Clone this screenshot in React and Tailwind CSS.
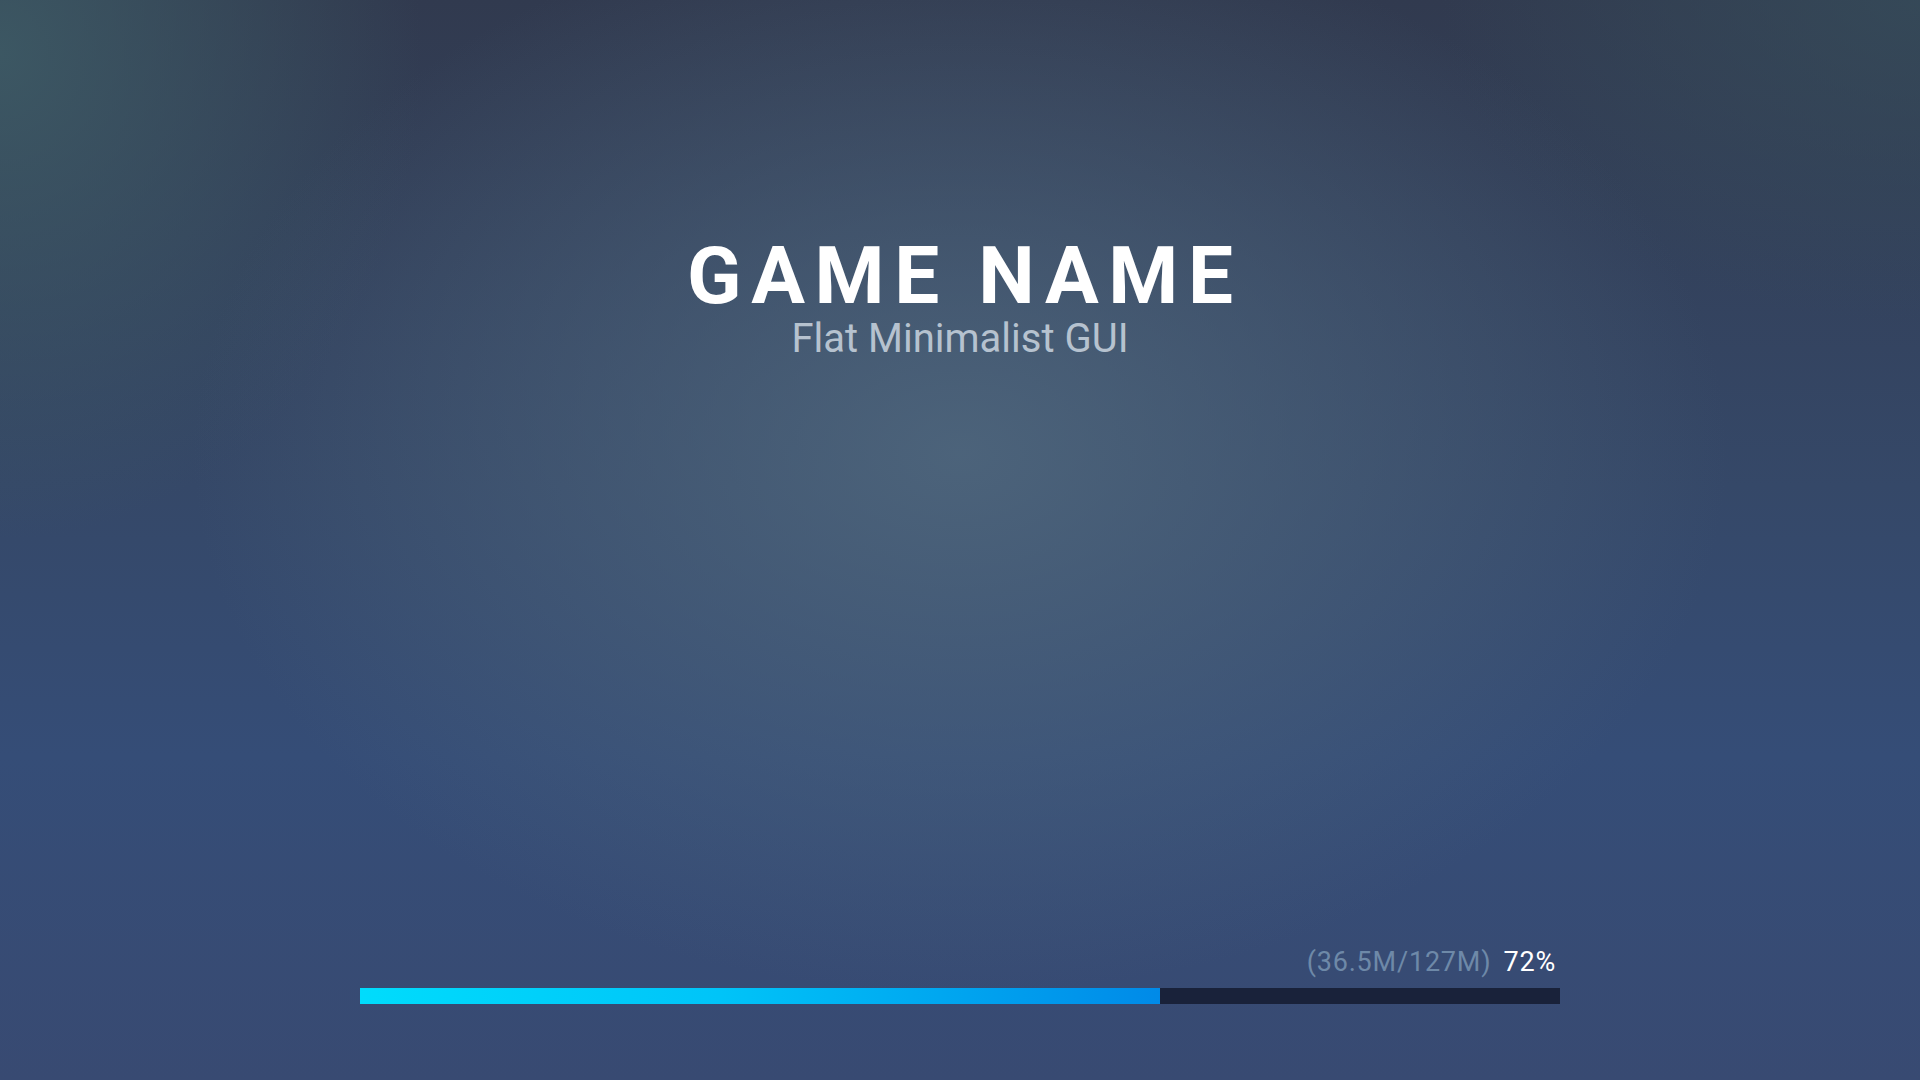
export default function App() {
  return (
    <div
      className="w-full h-screen overflow-hidden flex flex-col items-center bg-[radial-gradient(ellipse_40%_50%_at_50%_42%,rgba(80,104,126,0.85),rgba(80,104,126,0)_100%),radial-gradient(ellipse_22%_45%_at_0%_5%,rgba(62,92,102,0.85),rgba(62,92,102,0)),radial-gradient(ellipse_25%_30%_at_100%_0%,rgba(54,76,90,0.8),rgba(54,76,90,0)),linear-gradient(180deg,#313a4f_0%,#354868_45%,#354d77_70%,#384a72_100%)]"
      style={{ fontFamily: '"Roboto", "Noto Sans", sans-serif' }}
    >
      <h1 className="mt-[246px] text-[80px] leading-[0.76] font-bold tracking-[0.12em] text-white pl-[0.12em]">
        GAME NAME
      </h1>
      <p className="mt-[16px] text-[40px] leading-[0.8] text-[#b6c2cf]">Flat Minimalist GUI</p>

      <div className="mt-auto mb-[76px] w-[1200px] flex flex-col">
        <div className="flex justify-end items-baseline gap-3 pr-1 text-[27px] tracking-[0.03em] leading-none mb-[12px]">
          <span className="text-[#6e89a8]">(36.5M/127M)</span>
          <span className="text-white">72%</span>
        </div>
        <div className="h-4 w-full bg-[#19223a] flex">
          <div className="h-full w-[800px] bg-[linear-gradient(90deg,#00dcfc,#00c4f8_45%,#008ae8)]" />
        </div>
      </div>
    </div>
  );
}
